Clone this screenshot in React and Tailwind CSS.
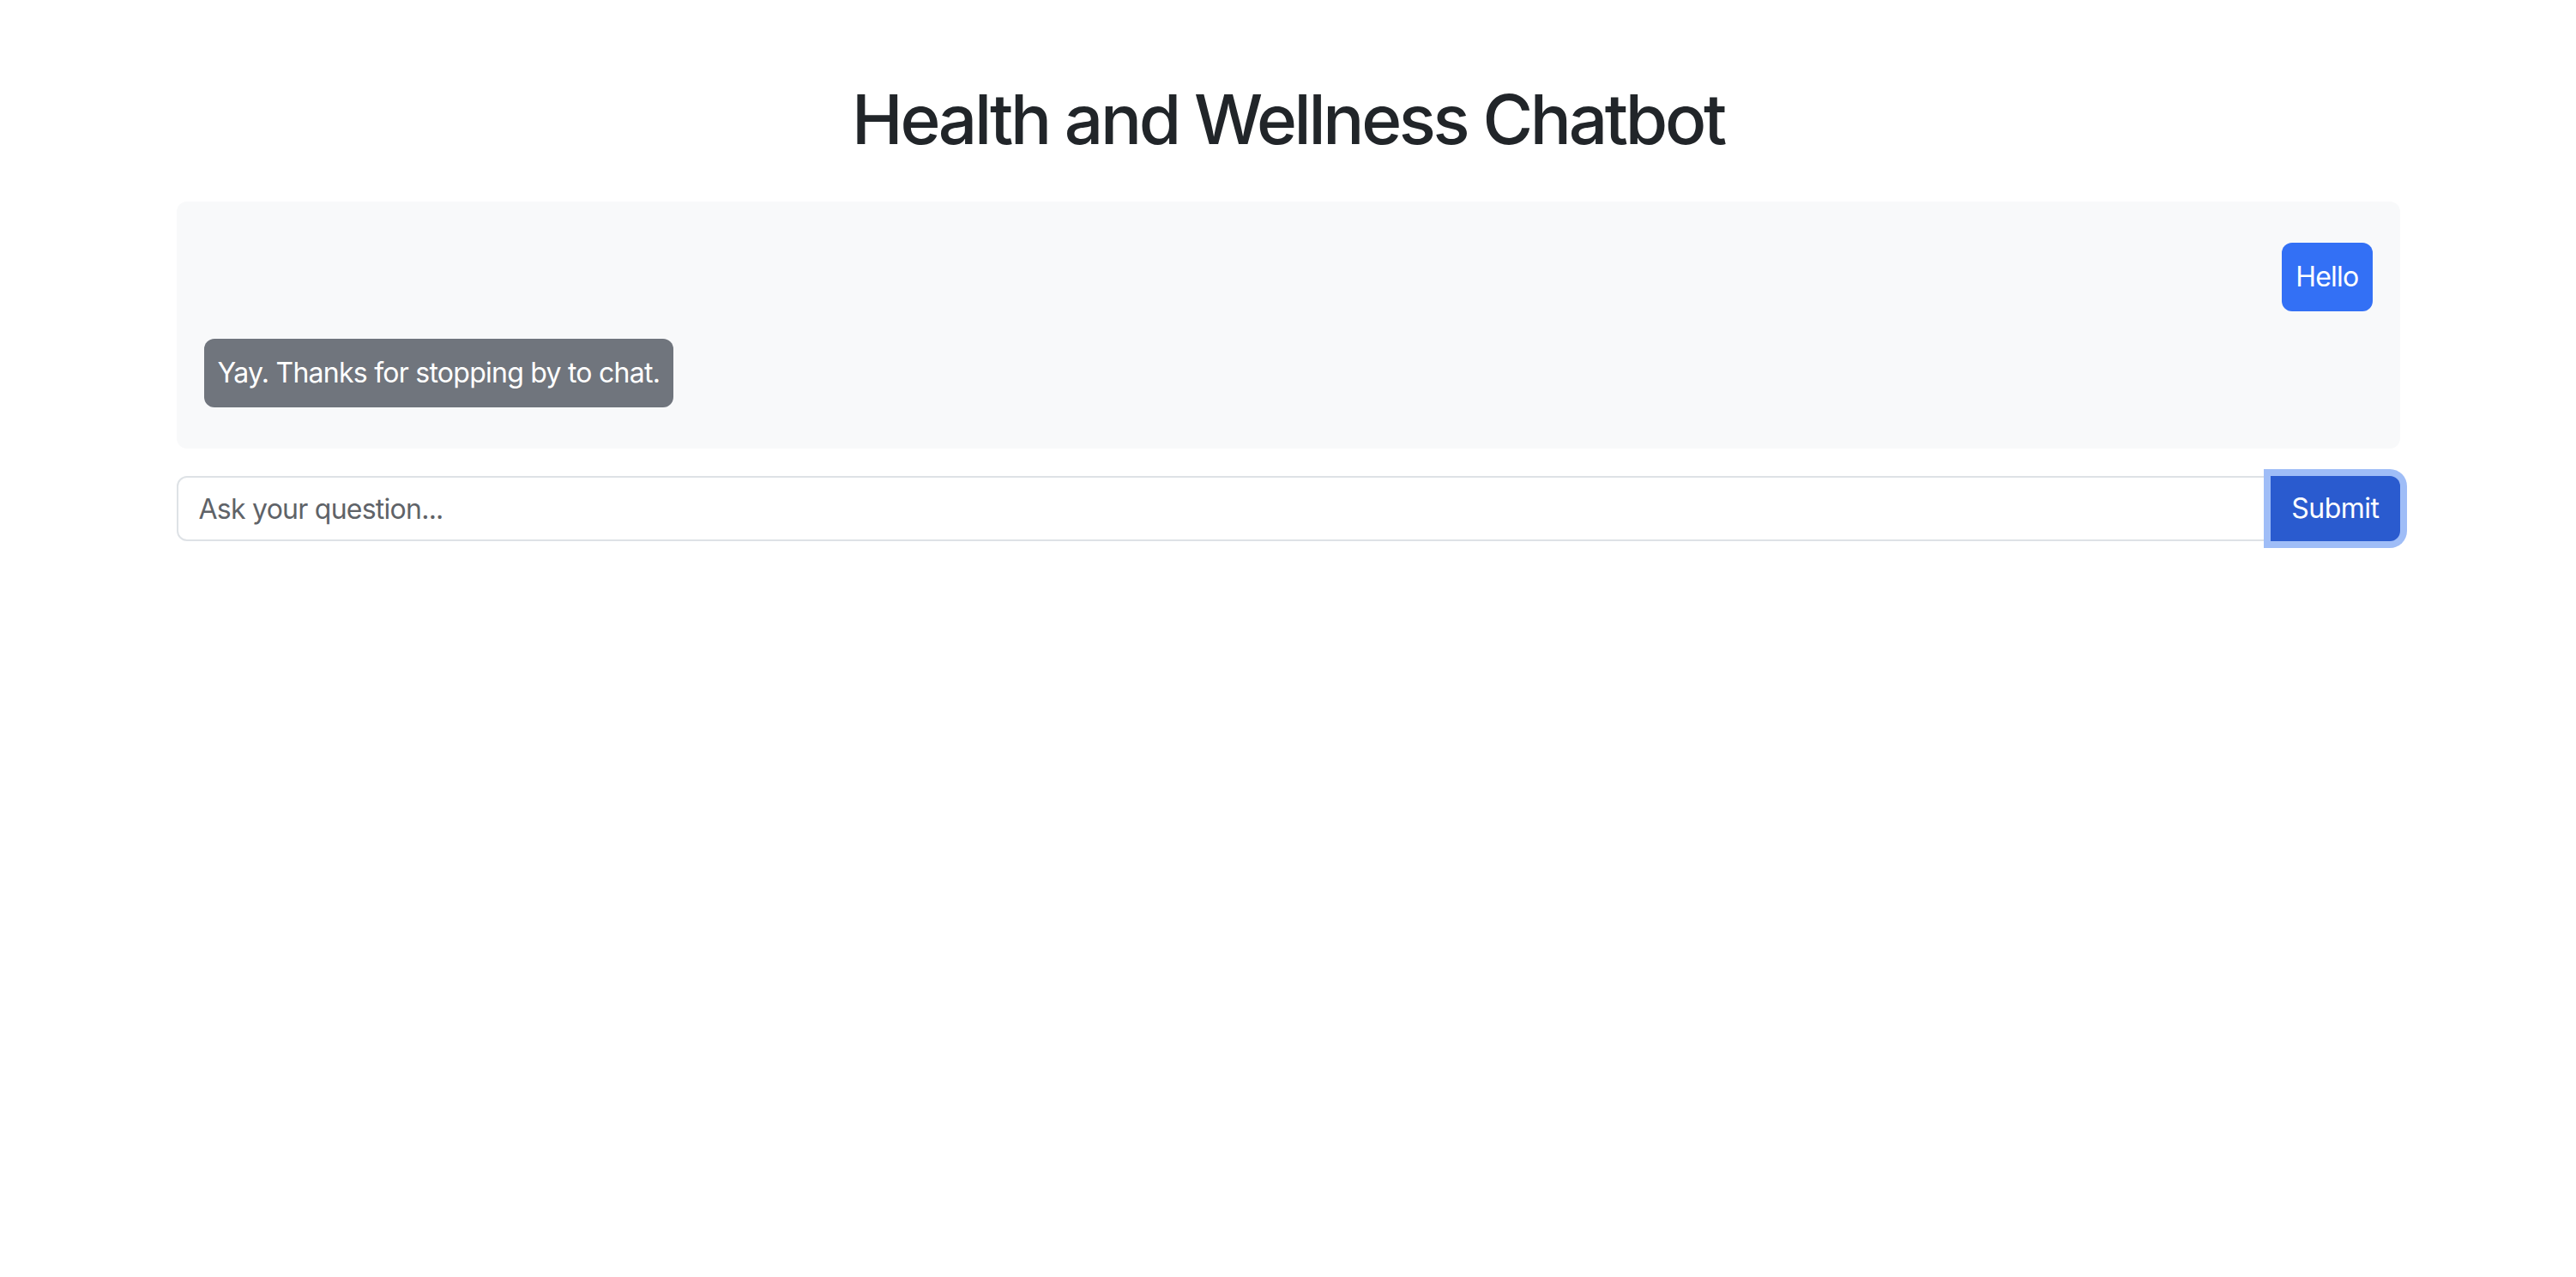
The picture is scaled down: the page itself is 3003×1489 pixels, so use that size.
import { useState } from "react";

const messages = [
    { from: "user", text: "Hello" },
    { from: "bot", text: "Yay. Thanks for stopping by to chat." },
];

export default function App() {
    const [question, setQuestion] = useState("");

    return (
        <div className="min-h-screen bg-white text-[#212529] font-['Inter','Liberation_Sans',sans-serif]">
            <div className="mx-auto max-w-[2640px] px-6 pt-[91px]">
                <h1 className="text-center text-[80px] leading-[96px] font-medium mb-[48px] tracking-[-3.3px]">
                    Health and Wellness Chatbot
                </h1>

                {/* Chat log */}
                <div className="flex flex-col gap-8 bg-[#f8f9fa] rounded-[12px] px-8 py-12 mb-8">
                    {messages.map((m, i) => (
                        <div key={i} className={`flex ${m.from === "user" ? "justify-end" : "justify-start"}`}>
                            <div
                                className={`p-4 rounded-[12px] text-white text-[32px] leading-[48px] tracking-[-0.75px] ${m.from === "user" ? "bg-[#3370f5]" : "bg-[#70757d]"}`}
                            >
                                {m.text}
                            </div>
                        </div>
                    ))}
                </div>

                {/* Input group */}
                <div className="flex">
                    <input
                        value={question}
                        onChange={e => setQuestion(e.target.value)}
                        placeholder="Ask your question..."
                        className="flex-1 min-w-0 h-[76px] border-2 border-[#dee2e6] rounded-l-[12px] px-6 text-[32px] leading-[48px] tracking-[-0.75px] text-[#212529] placeholder:text-[#5f6368] outline-none bg-white"
                    />
                    <button className="relative z-10 -ml-[2px] h-[76px] px-6 rounded-r-[12px] bg-[#2a5bcf] text-white text-[32px] leading-[48px] tracking-[-0.5px] shadow-[0_0_0_8px_#9fbdf7]">
                        Submit
                    </button>
                </div>
            </div>
        </div>
    );
}
